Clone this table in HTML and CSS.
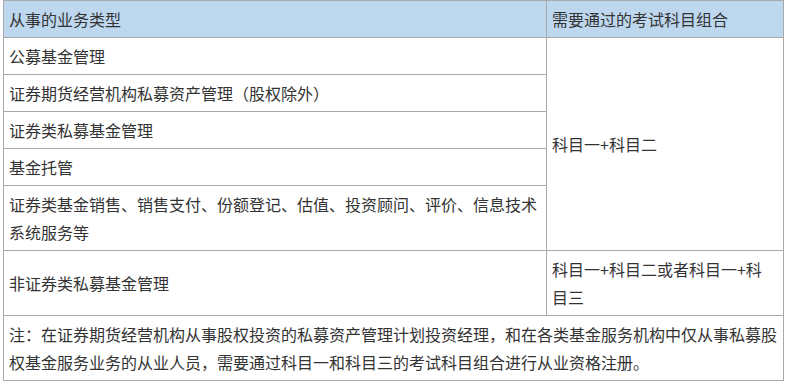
FILE: index.html
```html
<!DOCTYPE html>
<html lang="zh-CN">
<head>
<meta charset="utf-8">
<title>从业资格考试科目组合</title>
<link rel="stylesheet" href="styles.css">
</head>
<body>
<table class="exam-table">
  <colgroup>
    <col class="col-type">
    <col class="col-exam">
  </colgroup>
  <thead>
    <tr class="head-row">
      <th>从事的业务类型</th>
      <th class="exam-cell">需要通过的考试科目组合</th>
    </tr>
  </thead>
  <tbody>
    <tr>
      <td>公募基金管理</td>
      <td class="exam-cell" rowspan="5">科目一+科目二</td>
    </tr>
    <tr>
      <td>证券期货经营机构私募资产管理（股权除外）</td>
    </tr>
    <tr>
      <td>证券类私募基金管理</td>
    </tr>
    <tr>
      <td>基金托管</td>
    </tr>
    <tr>
      <td>证券类基金销售、销售支付、份额登记、估值、投资顾问、评价、信息技术系统服务等</td>
    </tr>
    <tr>
      <td>非证券类私募基金管理</td>
      <td class="exam-cell">科目一+科目二或者科目一+科目三</td>
    </tr>
    <tr>
      <td colspan="2">注：在证券期货经营机构从事股权投资的私募资产管理计划投资经理，和在各类基金服务机构中仅从事私募股权基金服务业务的从业人员，需要通过科目一和科目三的考试科目组合进行从业资格注册。</td>
    </tr>
  </tbody>
</table>
</body>
</html>
```

FILE: styles.css
```css
html, body {
  margin: 0;
  padding: 0;
  background: #ffffff;
}

body {
  font-family: "Noto Sans CJK SC", "Microsoft YaHei", sans-serif;
  font-size: 16px;
  color: #333333;
}

.exam-table {
  margin-left: 3px;
  width: 780px;
  border-collapse: collapse;
  table-layout: fixed;
}

.col-type {
  width: 543px;
}

.col-exam {
  width: 237px;
}

.exam-table th,
.exam-table td {
  border: 1px solid #a9a9a9;
  padding: 4px 5px;
  line-height: 28px;
  text-align: left;
  vertical-align: middle;
  font-weight: 400;
  word-break: break-all;
}

.exam-table .exam-cell {
  padding-right: 16px;
}

.head-row th {
  background: #bdd7ee;
}
```
